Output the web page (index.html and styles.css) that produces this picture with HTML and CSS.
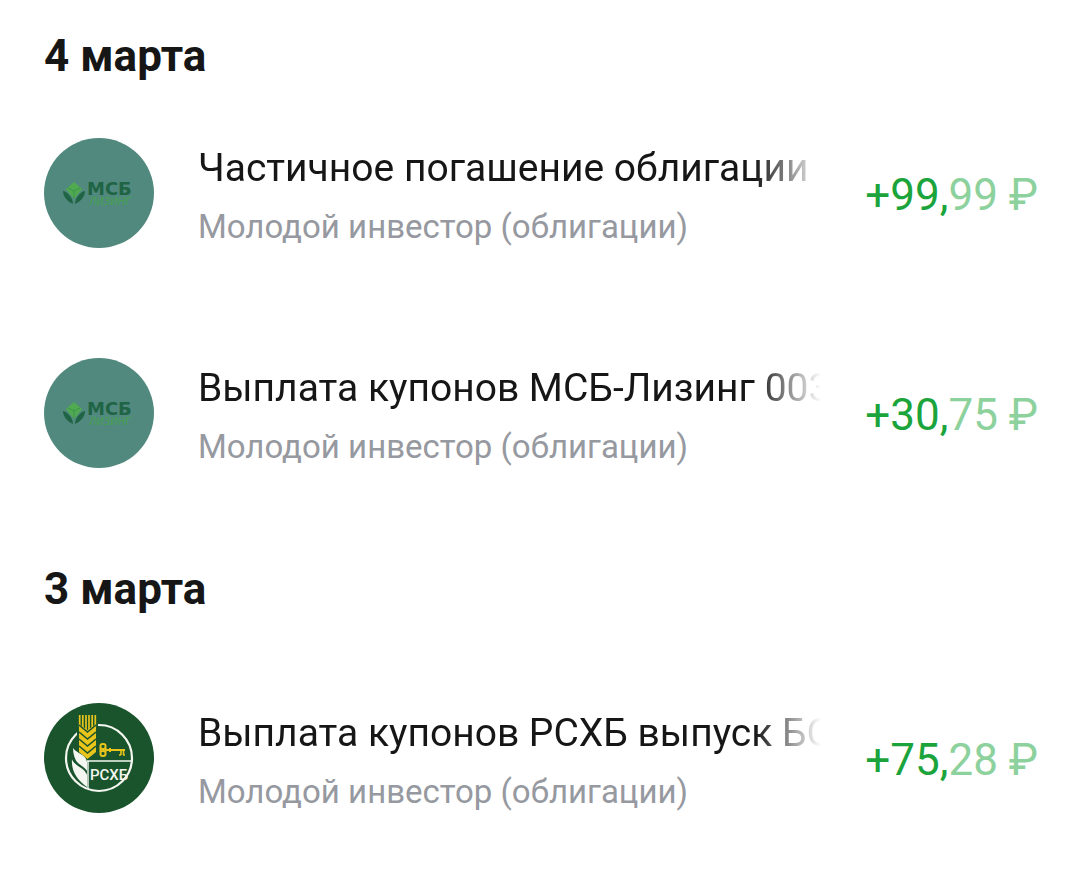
FILE: index.html
```html
<!DOCTYPE html>
<html lang="ru">
<head>
    <meta charset="utf-8">
    <meta name="viewport" content="width=device-width, initial-scale=1">
    <title>Операции</title>
    <link rel="stylesheet" href="styles.css">
</head>
<body>

<main class="feed">
  <section class="day">
    <h2 class="date">4 марта</h2>
    <ul class="list">
      <li class="row">
        <svg class="logo" viewBox="0 0 110 110" role="img" aria-label="МСБ Лизинг">
          <circle cx="55" cy="55" r="55" fill="#52897e"/>
          <path d="M30 44l8 7-8 10-8-10z" fill="#50aa50"/>
          <path d="M24 50l6 3v7M36 50l-6 3" fill="none" stroke="#3c944e"/>
          <path d="M19 53c3 0 10 6 10 13-5-2-10-7-10-13zM41 53c-3 0-10 6-10 13 5-2 10-7 10-13z" fill="#1f6444"/>
          <text class="msb-name" x="43" y="57">МСБ</text>
          <text class="msb-sub" x="45" y="67">ЛИЗИНГ</text>
        </svg>
        <div class="info">
          <div class="title">Частичное погашение облигации</div>
          <div class="account">Молодой инвестор (облигации)</div>
        </div>
        <div class="amount">+99,<span class="minor">99 ₽</span></div>
      </li>
      <li class="row">
        <svg class="logo" viewBox="0 0 110 110" role="img" aria-label="МСБ Лизинг">
          <circle cx="55" cy="55" r="55" fill="#52897e"/>
          <path d="M30 44l8 7-8 10-8-10z" fill="#50aa50"/>
          <path d="M24 50l6 3v7M36 50l-6 3" fill="none" stroke="#3c944e"/>
          <path d="M19 53c3 0 10 6 10 13-5-2-10-7-10-13zM41 53c-3 0-10 6-10 13 5-2 10-7 10-13z" fill="#1f6444"/>
          <text class="msb-name" x="43" y="57">МСБ</text>
          <text class="msb-sub" x="45" y="67">ЛИЗИНГ</text>
        </svg>
        <div class="info">
          <div class="title">Выплата купонов МСБ-Лизинг 003</div>
          <div class="account">Молодой инвестор (облигации)</div>
        </div>
        <div class="amount">+30,<span class="minor">75 ₽</span></div>
      </li>
    </ul>
  </section>

  <section class="day">
    <h2 class="date">3 марта</h2>
    <ul class="list">
      <li class="row">
        <svg class="logo" viewBox="0 0 110 110" role="img" aria-label="РСХБ">
          <circle cx="55" cy="55" r="55" fill="#1a542d"/>
          <circle cx="55" cy="55" r="33" fill="none" stroke="#f3f7f0" stroke-width="2.2"/>
          <!-- wheat ear -->
          <path d="M33 10h21v43l-10 6-11-7z" fill="#1a542d"/>
          <path d="M35.700 12v12M38.800 12v14M42 12v16M45 12v16M48.200 12v14M51.300 12v12" stroke="#e9c51c" stroke-width="1.7"/>
          <path d="M35 21l8.500 6 8.500-6v28l-8.500 7-8.500-7z" fill="#e9c51c"/>
          <path d="M35 22l8.500 7 8.500-7M35 29l8.500 7 8.500-7M35 36l8.500 7 8.500-7M35 43l8.500 7 8.500-7" fill="none" stroke="#1a542d" stroke-width="1.6"/>
          <!-- leaves -->
          <path d="M29 45c4 6 13 6 14 14v11c-8-6-14-14-14-25z" fill="#f3f7f0"/>
          <path d="M28 56c3 8 14 9 15 16v12C33 77 27 68 28 56z" fill="#f3f7f0"/>
          <path d="M29 56c3 6 12 8 14 14" fill="none" stroke="#1a542d" stroke-width="2"/>
          <!-- key -->
          <g fill="none" stroke="#e9c51c">
            <rect x="56.500" y="41" width="5" height="5" rx="2" stroke-width="2"/>
            <rect x="56.500" y="48" width="5" height="5" rx="2" stroke-width="2"/>
            <path d="M56.500 45v4M61.500 45v4" stroke-width="2"/>
            <path d="M62 47h19M66 45v4" stroke-width="2"/>
            <path d="M77 47v5M79.500 47v5M75 52h2M79 52h2" stroke-width="1.600"/>
          </g>
          <path d="M43 58h45M44 58v28" fill="none" stroke="#f3f7f0" stroke-width="1.4"/>
          <text class="rshb-name" x="46" y="77">РСХБ</text>
        </svg>
        <div class="info">
          <div class="title">Выплата купонов РСХБ выпуск БО</div>
          <div class="account">Молодой инвестор (облигации)</div>
        </div>
        <div class="amount">+75,<span class="minor">28 ₽</span></div>
      </li>
    </ul>
  </section>
</main>

</body>
</html>
```
FILE: styles.css
```css
body {
    margin: 0;
    background: #fff;
    color: #161616;
    font-family: Roboto, "Liberation Sans", sans-serif;
}

.feed {
    padding: 0 42px 0 44px;
}

.date {
    margin: 0;
    padding: 40px 0 33px;
    font-size: 44px;
    line-height: 52px;
    font-weight: 700;
}

/* the first date sits right above its rows */
.day:first-child .date {
    padding: 30px 0 1px;
}

.list {
    margin: 0;
    padding: 0;
    list-style: none;
}

.row {
    display: flex;
    align-items: flex-start;
    gap: 44px;
    padding: 55px 0 47px;
}

.logo {
    flex: none;
    width: 110px;
    height: 110px;
}

.info {
    flex: 1;
    min-width: 0;
}

.title {
    overflow: hidden;
    white-space: nowrap;
    font-size: 39px;
    line-height: 60px;
    /* long names fade out instead of being cut */
    -webkit-mask-image: linear-gradient(to left, transparent, #000 66px);
    mask-image: linear-gradient(to left, transparent, #000 66px);
}

.account {
    color: #9699a0;
    font-size: 33px;
    line-height: 58px;
    white-space: nowrap;
}

.amount {
    color: #1ba43b;
    font-size: 44px;
    line-height: 114px;
    white-space: nowrap;
}

.minor {
    color: #8dd19d;
}

/* lettering inside the logos */
.msb-name {
    fill: #1f6444;
    font: 700 18px "DejaVu Sans", sans-serif;
}

.msb-sub {
    fill: #45a052;
    font: italic 10px "DejaVu Sans", sans-serif;
}

.rshb-name {
    fill: #f3f7f0;
    font: 500 15px Roboto, sans-serif;
}
```
